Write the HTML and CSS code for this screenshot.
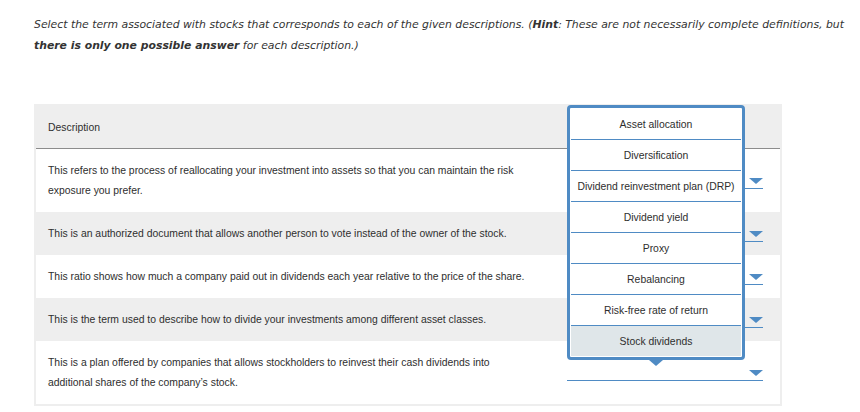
FILE: index.html
```html
<!DOCTYPE html>
<html>
<head>
<meta charset="utf-8">
<link rel="stylesheet" href="styles.css">
</head>
<body>
<div class="page">
  <p class="prompt">Select the term associated with stocks that corresponds to each of the given descriptions. (<b>Hint</b>: These are not necessarily complete definitions, but <b>there is only one possible answer</b> for each description.)</p>

  <div class="match">
    <div class="row head">
      <div class="desc">Description</div>
      <div class="cell"></div>
    </div>
    <div class="row">
      <div class="desc">This refers to the process of reallocating your investment into assets so that you can maintain the risk exposure you prefer.</div>
      <div class="cell"><div class="select"><span class="arrow"></span></div></div>
    </div>
    <div class="row alt">
      <div class="desc">This is an authorized document that allows another person to vote instead of the owner of the stock.</div>
      <div class="cell"><div class="select"><span class="arrow"></span></div></div>
    </div>
    <div class="row">
      <div class="desc">This ratio shows how much a company paid out in dividends each year relative to the price of the share.</div>
      <div class="cell"><div class="select"><span class="arrow"></span></div></div>
    </div>
    <div class="row alt">
      <div class="desc">This is the term used to describe how to divide your investments among different asset classes.</div>
      <div class="cell"><div class="select"><span class="arrow"></span></div></div>
    </div>
    <div class="row">
      <div class="desc">This is a plan offered by companies that allows stockholders to reinvest their cash dividends into additional shares of the company’s stock.</div>
      <div class="cell"><div class="select"><span class="arrow"></span></div></div>
    </div>

    <ul class="popup">
      <li>Asset allocation</li>
      <li>Diversification</li>
      <li>Dividend reinvestment plan (DRP)</li>
      <li>Dividend yield</li>
      <li>Proxy</li>
      <li>Rebalancing</li>
      <li>Risk-free rate of return</li>
      <li class="active">Stock dividends</li>
    </ul>
  </div>
</div>
</body>
</html>
```

FILE: styles.css
```css
html, body {
  margin: 0;
  padding: 0;
  background: #fff;
}

.page {
  padding: 14px 10px 0 34px;
}

.prompt {
  margin: 0;
  font-family: "DejaVu Sans", Verdana, sans-serif;
  font-style: italic;
  font-size: 10.85px;
  line-height: 21px;
  color: #333;
}

.prompt b {
  font-weight: bold;
}

.match {
  position: relative;
  width: 748px;
  box-sizing: border-box;
  margin-top: 48px;
  border: 2px solid #eeeeee;
  font-family: "Liberation Sans", Arial, sans-serif;
  font-size: 10.4px;
  line-height: 20px;
  color: #2e2e2e;
}

.row {
  display: grid;
  grid-template-columns: 482px 196px;
  column-gap: 37px;
  padding: 12px 17px 11px 12px;
  align-items: center;
  background: #fff;
}

.row.alt {
  background: #eeeeee;
}

.row.head {
  background: #eeeeee;
  padding: 12px 17px 10px 12px;
  border-bottom: 1px solid #8c8c8c;
}

.select {
  height: 14px;
  border-bottom: 1px solid #4f8bc4;
  display: flex;
  justify-content: flex-end;
  align-items: flex-end;
}

.arrow {
  width: 0;
  height: 0;
  border-left: 7px solid transparent;
  border-right: 7px solid transparent;
  border-top: 6px solid #4f8bc4;
  margin-bottom: 4px;
}

.popup {
  position: absolute;
  left: 531px;
  top: -1px;
  width: 178px;
  box-sizing: border-box;
  margin: 0;
  padding: 1px;
  list-style: none;
  background: #fff;
  border: 3px solid #4f8bc4;
  border-radius: 4px;
  z-index: 2;
}

.popup::after {
  content: "";
  position: absolute;
  left: 50%;
  margin-left: -7px;
  bottom: -9px;
  border-left: 7px solid transparent;
  border-right: 7px solid transparent;
  border-top: 6px solid #4f8bc4;
}

.popup li {
  height: 29px;
  padding-top: 1px;
  line-height: 29px;
  text-align: center;
  border-bottom: 1px solid #4f8bc4;
  white-space: nowrap;
  color: #2e2e2e;
}

.popup li:last-child {
  border-bottom: none;
}

.popup li.active {
  background: #dfe6e9;
}
```
